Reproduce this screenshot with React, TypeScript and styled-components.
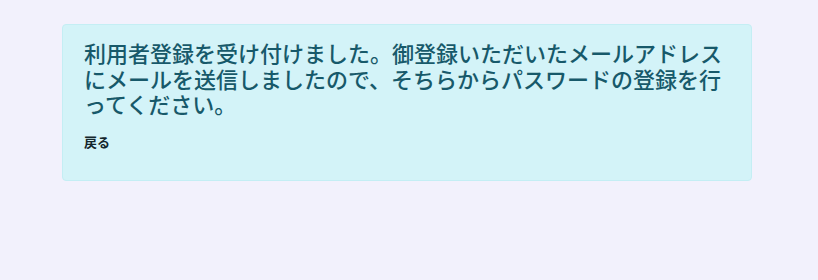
import React from "react";
import styled, { createGlobalStyle } from "styled-components";

const GlobalStyle = createGlobalStyle`
  html, body {
    margin: 0;
    padding: 0;
    background: #f2f1fc;
  }
  body {
    font-family: "Noto Sans CJK JP", "Noto Sans", sans-serif;
  }
`;

const Page = styled.div`
  width: 818px;
  height: 280px;
  box-sizing: border-box;
  padding: 24px 66px 0 62px;
`;

const Alert = styled.div`
  box-sizing: border-box;
  height: 157px;
  padding: 15px 20px 0 21px;
  background: #d3f3f8;
  border: 1px solid #c4eef4;
  border-radius: 4px;
`;

const Heading = styled.h4`
  margin: 0 0 11px;
  font-size: 22px;
  line-height: 25.5px;
  font-weight: 500;
  color: #17596a;
`;

const BackLink = styled.a`
  display: inline-block;
  font-size: 13px;
  line-height: 18px;
  font-weight: 700;
  color: #13262c;
  text-decoration: none;
`;

export default function App() {
  return (
    <>
      <GlobalStyle />
      <Page>
        <Alert>
          <Heading>
            利用者登録を受け付けました。御登録いただいたメールアドレスにメールを送信しましたので、そちらからパスワードの登録を行ってください。
          </Heading>
          <BackLink href="#">戻る</BackLink>
        </Alert>
      </Page>
    </>
  );
}
